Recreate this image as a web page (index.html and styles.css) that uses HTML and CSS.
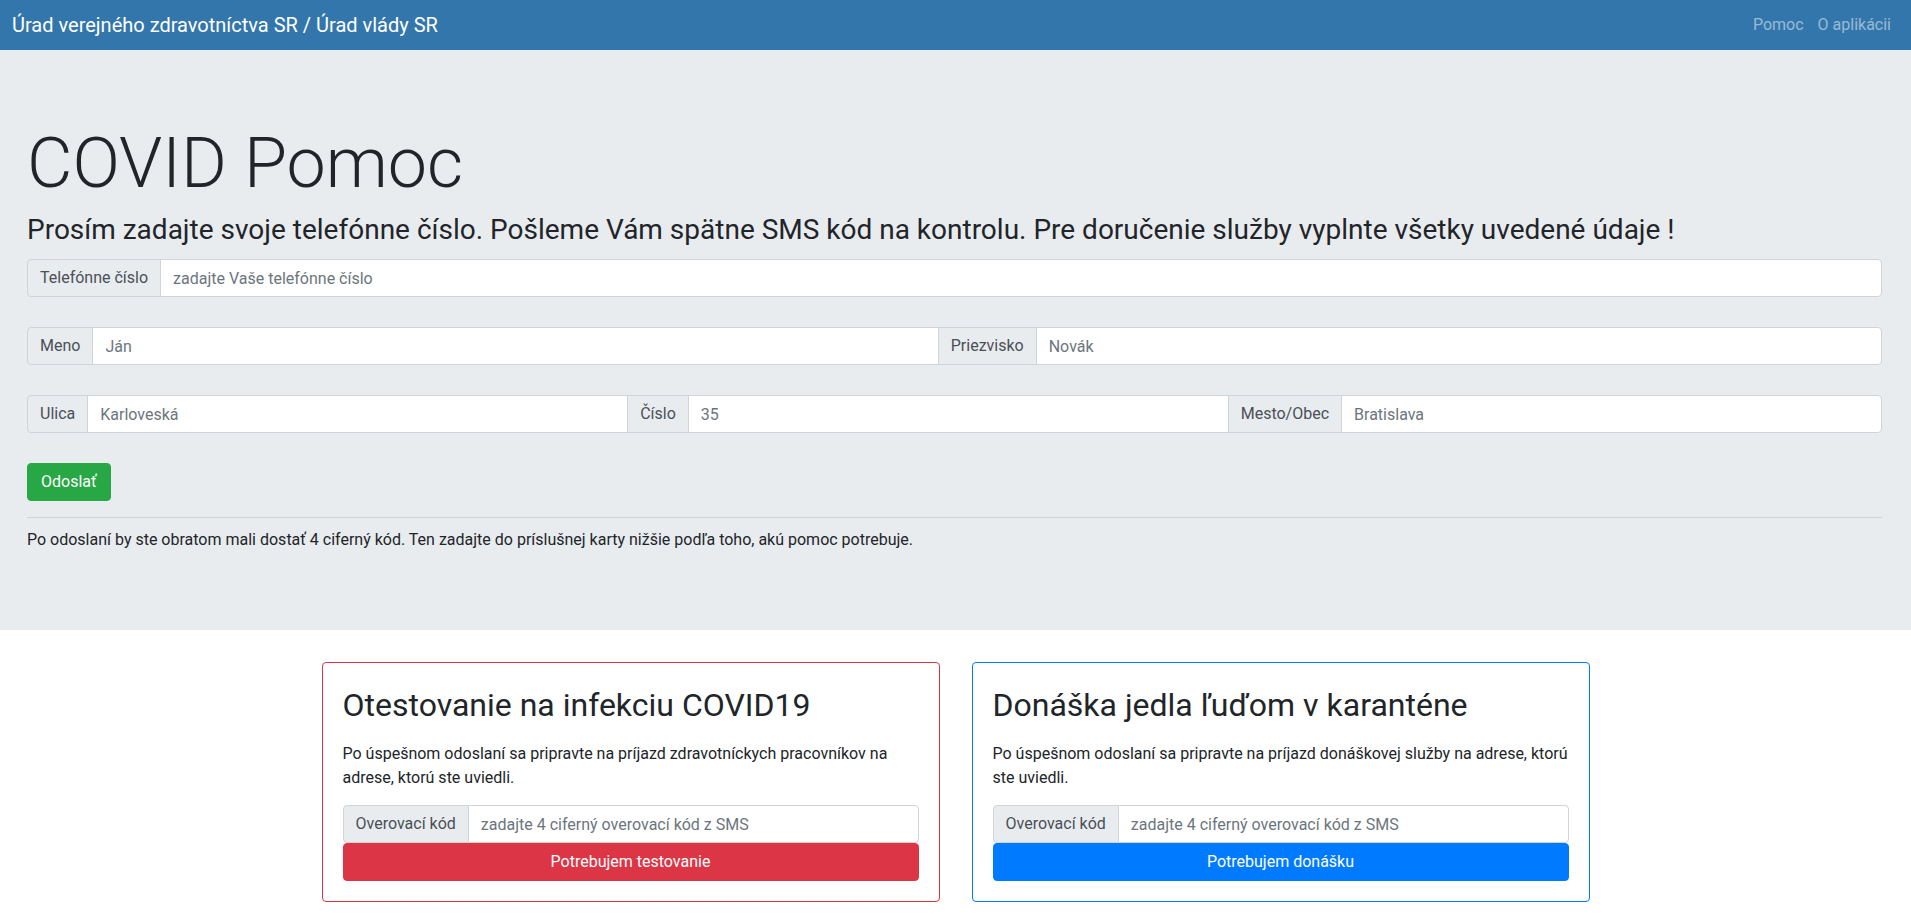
FILE: index.html
```html
<!DOCTYPE html>
<html lang="sk">
<head>
<meta charset="utf-8">
<title>COVID Pomoc</title>
<link rel="stylesheet" href="styles.css">
</head>
<body>
<nav class="navbar">
  <a class="brand" href="#">Úrad verejného zdravotníctva SR / Úrad vlády SR</a>
  <ul class="nav">
    <li><a class="nav-link" href="#">Pomoc</a></li>
    <li><a class="nav-link" href="#">O aplikácii</a></li>
  </ul>
</nav>
<section class="jumbotron">
  <h1 class="display">COVID Pomoc</h1>
  <h3 class="subtitle">Prosím zadajte svoje telefónne číslo. Pošleme Vám spätne SMS kód na kontrolu. Pre doručenie služby vyplnte všetky uvedené údaje !</h3>
  <form class="form">
    <div class="input-group">
      <span class="addon">Telefónne číslo</span>
      <input class="field" type="text" placeholder="zadajte Vaše telefónne číslo">
    </div>
    <div class="input-group">
      <span class="addon">Meno</span>
      <input class="field" type="text" placeholder="Ján">
      <span class="addon">Priezvisko</span>
      <input class="field" type="text" placeholder="Novák">
    </div>
    <div class="input-group">
      <span class="addon">Ulica</span>
      <input class="field" type="text" placeholder="Karloveská">
      <span class="addon">Číslo</span>
      <input class="field" type="text" placeholder="35">
      <span class="addon">Mesto/Obec</span>
      <input class="field" type="text" placeholder="Bratislava">
    </div>
    <div class="actions">
      <button class="btn btn-success" type="button">Odoslať</button>
    </div>
  </form>
  <hr class="divider">
  <p class="note">Po odoslaní by ste obratom mali dostať 4 ciferný kód. Ten zadajte do príslušnej karty nižšie podľa toho, akú pomoc potrebuje.</p>
</section>
<main class="cards">
  <div class="card card-danger">
    <h2 class="card-title">Otestovanie na infekciu COVID19</h2>
    <p class="card-text">Po úspešnom odoslaní sa pripravte na príjazd zdravotníckych pracovníkov na adrese, ktorú ste uviedli.</p>
    <div class="input-group">
      <span class="addon">Overovací kód</span>
      <input class="field" type="text" placeholder="zadajte 4 ciferný overovací kód z SMS">
    </div>
    <button class="btn btn-block btn-danger" type="button">Potrebujem testovanie</button>
  </div>
  <div class="card card-primary">
    <h2 class="card-title">Donáška jedla ľuďom v karanténe</h2>
    <p class="card-text">Po úspešnom odoslaní sa pripravte na príjazd donáškovej služby na adrese, ktorú ste uviedli.</p>
    <div class="input-group">
      <span class="addon">Overovací kód</span>
      <input class="field" type="text" placeholder="zadajte 4 ciferný overovací kód z SMS">
    </div>
    <button class="btn btn-block btn-primary" type="button">Potrebujem donášku</button>
  </div>
</main>
</body>
</html>
```

FILE: styles.css
```css
* { box-sizing: border-box; }
html, body { margin: 0; padding: 0; }
body {
  font-family: "Roboto", "Open Sans", sans-serif;
  font-size: 16px;
  line-height: 1.5;
  color: #212529;
  background: #fff;
}
.navbar {
  height: 50px;
  background: #3276ab;
  display: flex;
  align-items: center;
  justify-content: space-between;
  padding: 0 13px 0 12px;
}
.brand {
  color: #fff;
  font-size: 20px;
  text-decoration: none;
  line-height: 30px;
}
.nav {
  list-style: none;
  display: flex;
  margin: 0;
  padding: 0;
}
.nav-link {
  display: block;
  padding: 8px 7px;
  color: rgba(255, 255, 255, .5);
  text-decoration: none;
}
.jumbotron {
  background: #e9ecef;
  padding: 71px 29px 78px 27px;
}
.display {
  font-size: 70px;
  font-weight: 300;
  line-height: 84px;
  margin: 0 0 8px;
}
.subtitle {
  font-size: 28px;
  font-weight: 400;
  line-height: 34px;
  margin: 0 0 12px;
}
.form {
  display: flex;
  flex-direction: column;
  gap: 30px;
  margin: 0;
}
.input-group {
  display: flex;
  align-items: stretch;
  width: 100%;
}
.addon {
  display: flex;
  align-items: center;
  padding: 6px 12px;
  font-size: 16px;
  line-height: 24px;
  color: #495057;
  background: #e9ecef;
  border: 1px solid #ced4da;
  white-space: nowrap;
}
.field {
  flex: 1 1 0;
  min-width: 0;
  height: 38px;
  padding: 6px 12px;
  font: inherit;
  font-size: 16px;
  color: #495057;
  background: #fff;
  border: 1px solid #ced4da;
  outline: none;
}
.field::placeholder { color: #6c757d; opacity: 1; }
.input-group > * + * { margin-left: -1px; }
.input-group > :first-child { border-radius: 4px 0 0 4px; }
.input-group > :last-child { border-radius: 0 4px 4px 0; }
.actions { display: flex; }
.btn {
  font: inherit;
  font-size: 16px;
  line-height: 24px;
  padding: 6px 12px;
  border: 1px solid transparent;
  border-radius: 4px;
  color: #fff;
  cursor: pointer;
}
.btn-success {
  padding: 6px 13px;
  background: #28a745;
  border-color: #28a745;
}
.btn-danger { background: #dc3545; border-color: #dc3545; }
.btn-primary { background: #007bff; border-color: #007bff; }
.btn-block { display: block; width: 100%; }
.divider {
  margin: 16px 0 10px;
  border: 0;
  border-top: 1px solid rgba(0, 0, 0, .1);
}
.note { margin: 0; }
.cards {
  display: flex;
  justify-content: center;
  gap: 32px;
  padding: 32px 0 19px;
}
.card {
  width: 618px;
  border: 1px solid;
  border-radius: 4px;
  padding: 20px;
  background: #fff;
}
.card-danger { border-color: #dc3545; }
.card-primary { border-color: #007bff; }
.card-title {
  font-size: 32px;
  font-weight: 400;
  line-height: 44px;
  margin: 0 0 15px;
}
.card-text { margin: 0 0 15px; }
```
